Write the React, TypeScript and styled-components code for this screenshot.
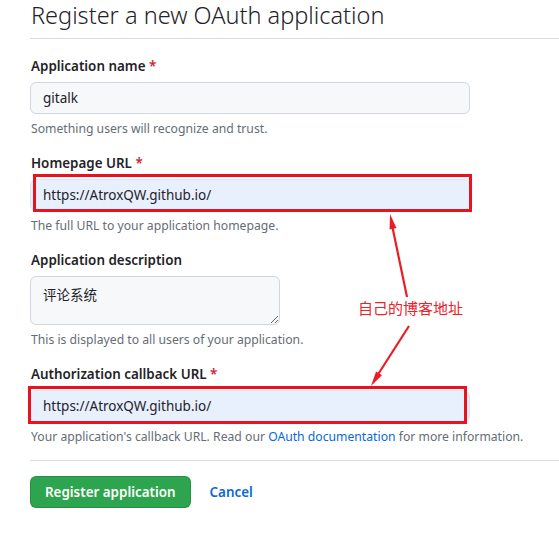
import React from 'react'
import styled, { createGlobalStyle } from 'styled-components'

const FONT = `"Noto Sans", "Noto Sans CJK SC", sans-serif`

const GlobalStyle = createGlobalStyle`
  body {
    margin: 0;
    background: #ffffff;
    font-family: ${FONT};
    color: #1f2328;
  }
`

type Box = { top: number, left: number, right: number, bottom: number }

type FieldProps = {
  label: string,
  required?: boolean,
  hint: React.ReactNode,
  children: React.ReactNode
}

const Field = ({ label, required, hint, children }: FieldProps) => (
  <Group>
    <Label>
      {label}
      {required && <Required> *</Required>}
    </Label>
    {children}
    <Hint>{hint}</Hint>
  </Group>
)

const arrowHead = (x1: number, y1: number, x2: number, y2: number) => {
  const dx = x2 - x1
  const dy = y2 - y1
  const len = Math.hypot(dx, dy)
  const ux = dx / len
  const uy = dy / len
  const bx = x2 - ux * 15
  const by = y2 - uy * 15
  const px = -uy * 3.5
  const py = ux * 3.5
  return `${x2},${y2} ${bx + px},${by + py} ${bx - px},${by - py}`
}

const Arrows = () => (
  <ArrowLayer width="559" height="533" viewBox="0 0 559 533">
    <line x1="407" y1="297" x2="392" y2="225" stroke="#ec1c24" strokeWidth="2.2" />
    <polygon points={arrowHead(407, 297, 390, 214)} fill="#ec1c24" />
    <line x1="409" y1="326" x2="377" y2="376" stroke="#ec1c24" strokeWidth="2.2" />
    <polygon points={arrowHead(409, 326, 371, 386)} fill="#ec1c24" />
  </ArrowLayer>
)

export const App = () => {
  return (
    <Page>
      <GlobalStyle />
      <Title>Register a new OAuth application</Title>

      <Form>
        <Field label="Application name" required hint="Something users will recognize and trust.">
          <Input defaultValue="gitalk" />
        </Field>

        <Field label="Homepage URL" required hint="The full URL to your application homepage.">
          <InputWrap>
            <Input $filled defaultValue="https://AtroxQW.github.io/" />
            <Highlight $box={{ top: -5, left: 3, right: -2, bottom: -1 }} />
          </InputWrap>
        </Field>

        <Field label="Application description" hint="This is displayed to all users of your application.">
          <TextArea defaultValue="评论系统" />
        </Field>

        <Field
          label="Authorization callback URL"
          required
          hint={<>Your application's callback URL. Read our <Link href="#">OAuth documentation</Link> for more information.</>}
        >
          <InputWrap>
            <Input $filled defaultValue="https://AtroxQW.github.io/" />
            <Highlight $box={{ top: -4, left: -2, right: 3, bottom: -2 }} />
          </InputWrap>
        </Field>
      </Form>

      <Actions>
        <PrimaryButton>Register application</PrimaryButton>
        <CancelLink href="#">Cancel</CancelLink>
      </Actions>

      <Arrows />
      <Note>自己的博客地址</Note>
    </Page>
  )
}

export default App

const Page = styled.div`
  position: relative;
  width: 559px;
  height: 533px;
  overflow: hidden;
  padding-left: 30px;
  box-sizing: border-box;
`

const Title = styled.h1`
  margin: 0;
  padding: 0 0 7px 1px;
  font-size: 23.5px;
  font-weight: 300;
  line-height: 31px;
  color: #1f2328;
  border-bottom: 1px solid #d8dee4;
`

const Form = styled.div`
  padding-top: 17px;
  display: flex;
  flex-direction: column;
  gap: 15px;
`

const Group = styled.div`
  display: flex;
  flex-direction: column;
  align-items: flex-start;
`

const Label = styled.label`
  font-size: 13.4px;
  font-weight: 600;
  line-height: 20px;
  margin: 0 0 6px 1px;
  color: #1f2328;
`

const Required = styled.span`
  color: #cf222e;
`

const Hint = styled.p`
  margin: 6px 0 0 1px;
  font-size: 12.2px;
  line-height: 18px;
  color: #656d76;
`

const Link = styled.a`
  color: #0969da;
  text-decoration: none;
`

const InputWrap = styled.div`
  position: relative;
`

const Input = styled.input<{ $filled?: boolean }>`
  display: block;
  width: 440px;
  height: 32px;
  box-sizing: border-box;
  padding: 0 12px;
  font-family: ${FONT};
  font-size: 13.5px;
  color: #1f2328;
  background: ${p => (p.$filled ? '#e8f0fe' : '#f6f8fa')};
  border: 1px solid ${p => (p.$filled ? '#dfe5ef' : '#d0d7de')};
  border-radius: 6px;
  outline: none;
`

const TextArea = styled.textarea`
  display: block;
  width: 250px;
  height: 49px;
  box-sizing: border-box;
  padding: 8px 12px;
  font-family: ${FONT};
  font-size: 13.5px;
  line-height: 20px;
  color: #1f2328;
  background: #f6f8fa;
  border: 1px solid #d0d7de;
  border-radius: 6px;
  outline: none;
`

const Highlight = styled.div<{ $box: Box }>`
  position: absolute;
  top: ${p => p.$box.top}px;
  left: ${p => p.$box.left}px;
  right: ${p => p.$box.right}px;
  bottom: ${p => p.$box.bottom}px;
  border: 3px solid #e8131f;
  pointer-events: none;
`

const Actions = styled.div`
  margin-top: 14px;
  padding-top: 15px;
  border-top: 1px solid #d8dee4;
  display: flex;
  align-items: center;
  gap: 19px;
`

const PrimaryButton = styled.button`
  height: 32px;
  padding: 0 14px;
  font-family: ${FONT};
  font-size: 13.4px;
  font-weight: 600;
  color: #ffffff;
  background: #2da44e;
  border: 1px solid rgba(27, 31, 36, 0.15);
  border-radius: 6px;
  cursor: pointer;
`

const CancelLink = styled.a`
  font-size: 13.4px;
  font-weight: 600;
  color: #0969da;
  text-decoration: none;
`

const ArrowLayer = styled.svg`
  position: absolute;
  top: 0;
  left: 0;
  pointer-events: none;
`

const Note = styled.div`
  position: absolute;
  left: 358px;
  top: 298px;
  font-family: "Noto Sans CJK SC", sans-serif;
  font-size: 15px;
  line-height: 20px;
  color: #ee2129;
`
